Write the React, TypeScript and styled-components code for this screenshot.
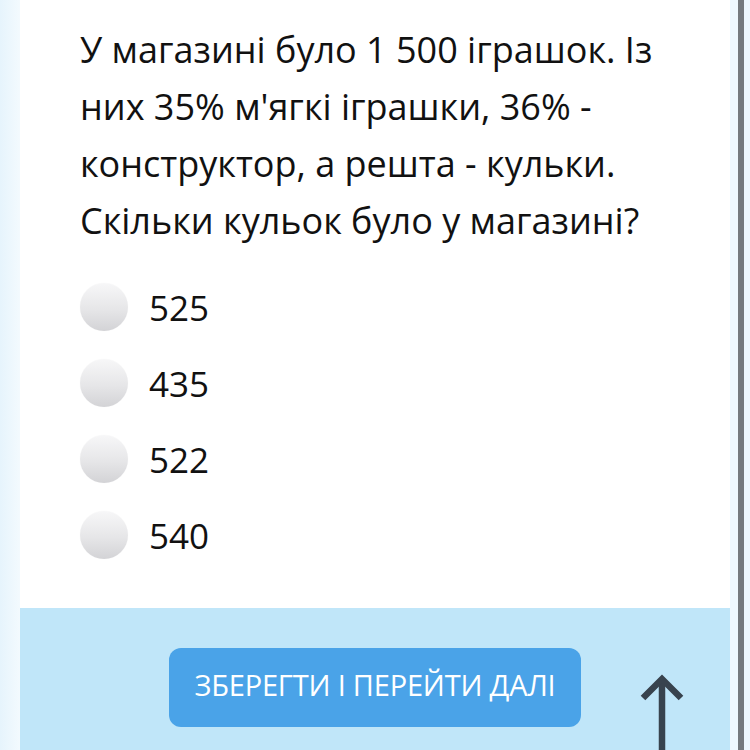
import React from "react";
import styled, { createGlobalStyle } from "styled-components";

const Global = createGlobalStyle`
  html, body { margin: 0; padding: 0; background: #ffffff; }
  body { font-family: "Open Sans", "Noto Sans", sans-serif; }
`;

const Page = styled.div`
  width: 750px;
  height: 750px;
  display: flex;
  overflow: hidden;
  background: #ffffff;
`;

const LeftRail = styled.div`
  width: 20px;
  flex: none;
  background: linear-gradient(to right, #e6f4fc, #f3fafe);
`;

const Card = styled.div`
  width: 710px;
  flex: none;
  display: flex;
  flex-direction: column;
  background: #ffffff;
`;

const RightRail = styled.div`
  flex: 1;
  display: flex;
  background: #eef8fe;
`;

const Scrollbar = styled.div`
  width: 6px;
  margin-left: 8px;
  background: #757a7e;
`;

const Body = styled.div`
  height: 608px;
  padding: 21px 0 0 60px;
  box-sizing: border-box;
`;

const Question = styled.p`
  margin: 0;
  width: 600px;
  font-size: 36px;
  line-height: 57px;
  color: #111111;
  letter-spacing: 0px;
`;

const Options = styled.div`
  display: flex;
  flex-direction: column;
  gap: 28px;
  margin-top: 34px;
`;

const Option = styled.label`
  display: flex;
  align-items: center;
  gap: 21px;
  height: 48px;
  font-size: 35px;
  color: #111111;
`;

const Radio = styled.span`
  width: 48px;
  height: 48px;
  border-radius: 50%;
  background: linear-gradient(to bottom, #f7f7f8 0%, #e6e6e8 55%, #d3d3d6 100%);
  box-shadow: 0 0 1px rgba(0, 0, 0, 0.06);
  flex: none;
`;

const Footer = styled.div`
  flex: 1;
  background: #c0e6f9;
  display: flex;
  position: relative;
  padding: 40px 0 0 149px;
  box-sizing: border-box;
`;

const SaveButton = styled.button`
  width: 412px;
  height: 79px;
  border: none;
  border-radius: 12px;
  background: #4aa3e8;
  color: #ffffff;
  font-family: "Open Sans", "Noto Sans", sans-serif;
  font-size: 29px;
  letter-spacing: -0.2px;
  text-transform: uppercase;
  padding: 0 0 6px;
`;

const UpArrow = styled.svg`
  position: absolute;
  left: 620px;
  top: 66px;
`;

const options = ["525", "435", "522", "540"];

export default function App() {
  return (
    <Page>
      <Global />
      <LeftRail />
      <Card>
        <Body>
          <Question>
            У магазині було 1 500 іграшок. Із них 35% м'ягкі іграшки, 36% -
            конструктор, а решта - кульки. Скільки кульок було у магазині?
          </Question>
          <Options>
            {options.map((o) => (
              <Option key={o}>
                <Radio />
                {o}
              </Option>
            ))}
          </Options>
        </Body>
        <Footer>
          <SaveButton>Зберегти і перейти далі</SaveButton>
          <UpArrow width="44" height="80" viewBox="0 0 44 80">
            <path d="M22 5 V80" stroke="#38434e" strokeWidth="6.5" fill="none" />
            <path d="M3 24 L22 5 L41 24" stroke="#38434e" strokeWidth="6.5" fill="none" />
          </UpArrow>
        </Footer>
      </Card>
      <RightRail>
        <Scrollbar />
      </RightRail>
    </Page>
  );
}
